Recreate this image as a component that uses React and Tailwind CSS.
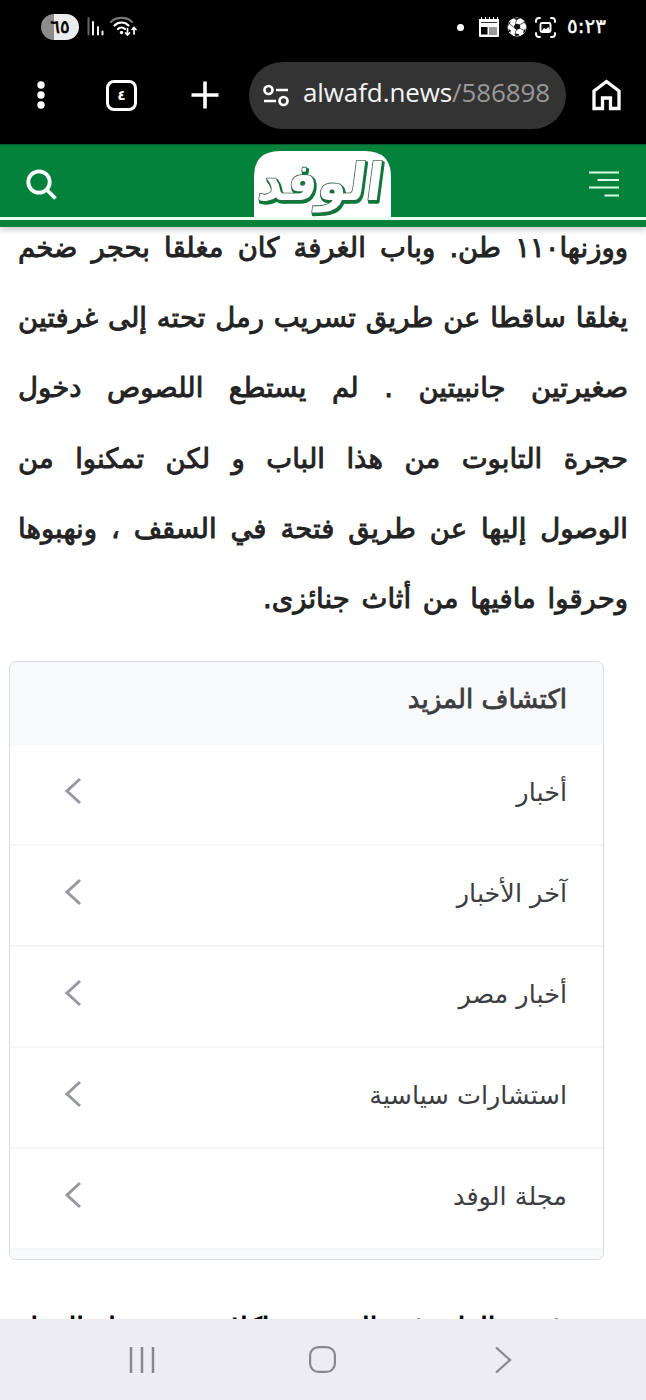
const paragraph = [
  "يغلقا ساقطا عن طريق تسريب رمل تحته إلى غرفتين",
  "صغيرتين جانبيتين . لم يستطع اللصوص دخول",
  "حجرة التابوت من هذا الباب و لكن تمكنوا من",
  "الوصول إليها عن طريق فتحة في السقف ، ونهبوها",
]

const topics = ["أخبار", "آخر الأخبار", "أخبار مصر", "استشارات سياسية", "مجلة الوفد"]

const StatusBar = () => (
  <div className="flex h-[52px] items-center justify-between pl-[41px] pr-[40px]">
    <div className="flex items-center">
      <div className="flex h-[26px] w-[38px] items-center justify-center rounded-full bg-linear-to-r from-[#8c8c8c] from-35% to-[#ececec] to-35% text-[18px] leading-none text-black [-webkit-text-stroke:0.6px_currentColor]">
        ٦٥
      </div>
      <svg className="ml-[8px]" width="18" height="20" viewBox="0 0 18 20" strokeWidth="2" strokeLinecap="round">
        <path d="M1.500 1v16.500" stroke="#666" />
        <path d="M6 5v12.500M11 10v7.500M15.500 14.500v3" stroke="#f2f2f2" />
      </svg>
      <svg className="ml-[5px]" width="28" height="22" viewBox="0 0 28 22" fill="none" strokeLinecap="round">
        <path d="M1 6C6 0.500 17 0.500 22 6" stroke="#777" strokeWidth="2.200" />
        <path d="M4.500 9.500C8 5.500 15 5.500 18.500 9.500M8 13C10 11 13 11 15 13" stroke="#fff" strokeWidth="2.200" />
        <circle cx="11.500" cy="16.500" r="1.700" fill="#fff" />
        <path d="M17.500 12.500v6M15.500 17l2 2 2-2M24 18v-6M22 13.500l2-2 2 2" stroke="#fff" strokeWidth="1.700" />
      </svg>
    </div>
    <div className="flex items-center">
      <div className="size-[7px] rounded-full bg-white" />
      <svg className="ml-[15px]" width="20" height="20" viewBox="0 0 20 20">
        <path d="M0 2h2V0h1v2h3V0h1v2h3V0h1v2h3V0h1v2h3V0h1v2h1v17q0 1-1 1H1q-1 0-1-1z" fill="#fff" />
        <path d="M2 5.500h16M10 11h8M10 13h8M10 15h8M10 17h8" stroke="#000" strokeWidth=".8" />
        <path d="M2 10h6.500v7.500H2z" fill="#000" />
      </svg>
      <svg className="ml-[8px]" width="20" height="20" viewBox="0 0 20 20">
        <circle cx="10" cy="10" r="9.500" fill="#fff" />
        <path d="M8.500 6.500l4.500 1 .3 4-4 1.500L6.500 10zM6 1.500L9.500 3l4-1.500L10 1zM1 9l2-2.500.5-2.500-2 2.500zM19 8l-2-2.500-.3-2.300 1.800 2.800zM3.300 16l.5-2.700L1.300 12l.7 2.500zM16 16.500l.7-3.200 2-1.800-.4 3zM8 16.500l3.500.5 1 1.500-3.500.500-1.500-1z" fill="#111" />
        <path d="M8.500 6.500L9.500 3M13 7.500L17 5.500M13.300 11.500l3.400 1.800M9.300 13L8 17M6.500 10L3 7" stroke="#333" strokeWidth=".8" />
      </svg>
      <svg className="ml-[8px]" width="21" height="21" viewBox="0 0 21 21" fill="none" stroke="#fff" strokeWidth="1.900" strokeLinecap="round">
        <path d="M1 5V4q0-3 3-3h1M16 1h1q3 0 3 3v1M20 16v1q0 3-3 3h-1M5 20H4q-3 0-3-3v-1" />
        <rect x="5.500" y="6" width="10" height="9" rx="1.500" />
        <path d="M6.500 14l2.500-3 2 1 2.500-2 1.500 4z" fill="#fff" stroke="none" />
      </svg>
      <span className="ml-[11px] w-[39px] whitespace-nowrap pb-[3px] text-[20px] leading-none text-white [-webkit-text-stroke:0.4px_currentColor]">٥:٢٣</span>
    </div>
  </div>
)

const BrowserBar = () => (
  <div className="flex h-[84px] items-center">
    <svg className="ml-[36px]" width="10" height="28" viewBox="0 0 10 28" fill="#fff">
      <circle cx="5" cy="4" r="3.700" />
      <circle cx="5" cy="14" r="3.700" />
      <circle cx="5" cy="24" r="3.700" />
    </svg>
    <div className="ml-[60px] flex size-[31px] items-center justify-center rounded-[8px] border-3 border-white text-[14px] font-bold leading-none text-white">
      ٤
    </div>
    <svg className="ml-[54px]" width="28" height="28" viewBox="0 0 28 28" stroke="#fff" strokeWidth="3.600">
      <path d="M14 .5v27M.5 14h27" />
    </svg>
    <div className="ml-[30px] flex h-[67px] w-[317px] items-center rounded-full bg-[#333]">
      <svg className="ml-[14px]" width="26" height="23" viewBox="0 0 26 23" fill="none" stroke="#fff" strokeWidth="2.700">
        <circle cx="5.500" cy="6" r="4" />
        <circle cx="20.500" cy="17" r="4" />
        <path d="M13 6h12M1 17h12" />
      </svg>
      <div className="ml-[14px] whitespace-nowrap pb-[6px] font-['Open_Sans'] text-[26px] leading-none tracking-[-0.1px] text-[#f5f5f5]">
        alwafd.news<span className="text-[#999]">/586898</span>
      </div>
    </div>
    <svg className="ml-[26px]" width="29" height="32" viewBox="0 0 29 32" fill="none" stroke="#fff" strokeWidth="3.300">
      <path d="M2 29.500V12L14.500 2.500 27 12v17.500h-8.500V19h-8v10.500z" />
    </svg>
  </div>
)

const Logo = () => (
  <svg width="137" height="66" viewBox="0 0 137 66">
    <path d="M0 66V26Q0 0 26 0h85q26 0 26 26v40z" fill="#fff" />
    <g fontFamily="'DejaVu Sans'" fontWeight="700" fontSize="46" direction="rtl" transform="translate(0 -1) scale(1.050 1.120) skewX(-8)" strokeLinejoin="round">
      <text x="128.500" y="46.500" fill="#087b38" stroke="#087b38" strokeWidth="3">الوفد</text>
      <text x="127" y="44.500" fill="#fff" stroke="#35634a" strokeWidth="1.500" paintOrder="stroke">الوفد</text>
    </g>
  </svg>
)

const SiteHeader = () => (
  <header className="relative z-10 h-[83px] border-t border-[#075b2c] bg-[#04823c] shadow-[0_3px_6px_rgba(0,0,0,0.2)]">
    <div className="flex h-[75px] items-end border-b-3 border-[#e8fff0] pl-[26px]">
      <svg className="mb-[16px]" width="32" height="32" viewBox="0 0 32 32" fill="none" stroke="#fff" strokeWidth="3.800">
        <circle cx="13" cy="13" r="10.700" />
        <path d="M20.500 20.500l9 9" />
      </svg>
      <div className="ml-[196px]"><Logo /></div>
      <svg className="mb-[19px] ml-[197px]" width="32" height="28" viewBox="0 0 32 28" stroke="#d9ffe8" strokeWidth="2">
        <path d="M1 2.500h30M9.500 10h21.500M1 17.500h30M16.500 25.500h14.500" />
      </svg>
    </div>
  </header>
)

const DiscoverMore = () => (
  <section className="mr-[42px] mt-[28px] h-[599px] w-[595px] overflow-hidden rounded-[7px] border border-[#dadce3] bg-[#f8f9fb] text-[#3c3d41]">
    <h2 className="flex h-[83px] items-center pb-[8px] pr-[36px] text-[26px] [-webkit-text-stroke:0.8px_currentColor]">اكتشاف المزيد</h2>
    {topics.map((topic) => (
      <a key={topic} className="flex h-[101px] items-center justify-between border-b-2 border-[#f5f6f8] bg-white pl-[54px] pr-[36px]">
        <span className="pb-[6px] text-[25.500px]">{topic}</span>
        <svg className="mb-[8px]" width="18" height="28" viewBox="0 0 18 28" fill="none" stroke="#9699a0" strokeWidth="3">
          <path d="M16 2L3 14l13 12" />
        </svg>
      </a>
    ))}
  </section>
)

const NavBar = () => (
  <nav className="flex h-[81px] items-center bg-[#edecf3] text-[#88878e]">
    <svg className="ml-[129px]" width="26" height="26" viewBox="0 0 26 26" stroke="currentColor" strokeWidth="2.500">
      <path d="M2 0v26M13 0v26M24 0v26" />
    </svg>
    <svg className="ml-[154px]" width="27" height="27" viewBox="0 0 27 27" fill="none" stroke="currentColor" strokeWidth="2.200">
      <rect x="1.100" y="1.100" width="24.800" height="24.800" rx="8.500" />
    </svg>
    <svg className="ml-[158px]" width="18" height="28" viewBox="0 0 18 28" fill="none" stroke="currentColor" strokeWidth="2.300">
      <path d="M2 1.500L16 14 2 26.500" />
    </svg>
  </nav>
)

const App = () => (
  <div className="flex h-[1400px] w-[646px] flex-col overflow-hidden bg-white font-['DejaVu_Sans',sans-serif]">
    <div className="h-[144px] shrink-0 bg-black pt-px">
      <StatusBar />
      <BrowserBar />
    </div>
    <SiteHeader />
    <main dir="rtl" className="h-[1092px] overflow-hidden pt-px">
      <div className="px-[18px] text-[27.500px] leading-[70.300px] text-[#232323] [-webkit-text-stroke:0.9px_currentColor]">
        <p className="mb-[16px] whitespace-nowrap leading-[38px] [text-align-last:justify]">ووزنها١١٠ طن. وباب الغرفة كان مغلقا بحجر ضخم</p>
        {paragraph.map((line) => (
          <p key={line} className="whitespace-nowrap [text-align-last:justify]">{line}</p>
        ))}
        <p className="whitespace-nowrap [word-spacing:3px]">وحرقوا مافيها من أثاث جنائزى.</p>
      </div>
      <DiscoverMore />
      <p className="mt-[32px] whitespace-nowrap px-[18px] text-[27.500px] leading-[70px] text-black [text-align-last:justify] [-webkit-text-stroke:0.9px_currentColor]">
        ممن غرفة العلم غير الصحة شاكلا سرد معدل العمل
      </p>
    </main>
    <NavBar />
  </div>
)

export default App
